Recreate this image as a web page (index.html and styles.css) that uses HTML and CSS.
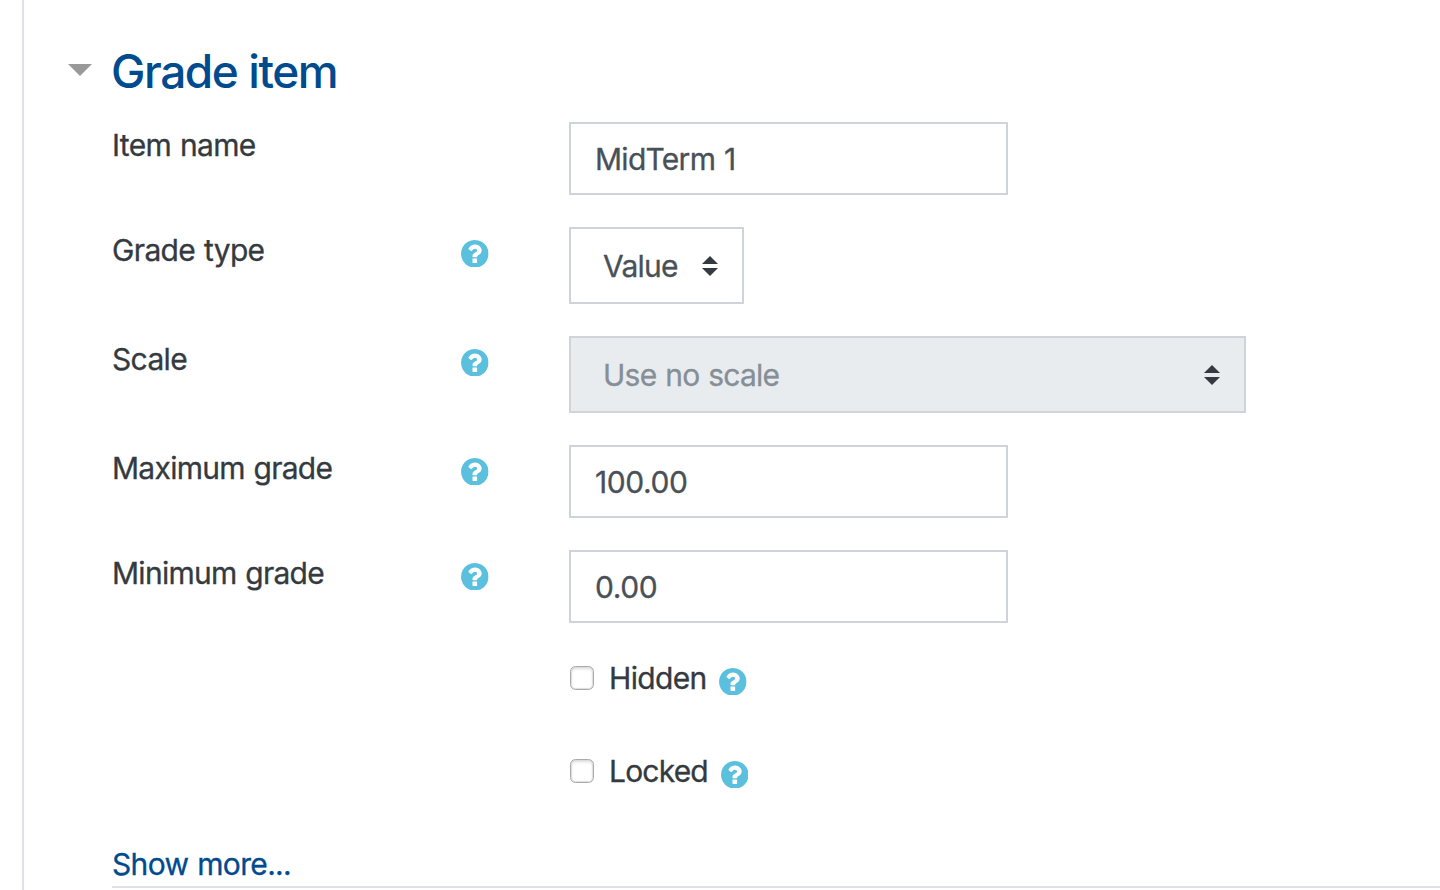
FILE: index.html
```
<!DOCTYPE html>
<html lang="en">
<head>
<meta charset="utf-8">
<title>Grade item</title>
<link rel="stylesheet" href="styles.css">
</head>
<body>
<svg class="defs" width="0" height="0">
<symbol id="help" viewBox="128 128 1536 1536"><path fill="#5bc0de" d="M1024 1376v-192q0-14-9-23t-23-9h-192q-14 0-23 9t-9 23v192q0 14 9 23t23 9h192q14 0 23-9t9-23zm256-672q0-88-55.500-163t-138.500-116-170-41q-243 0-371 213-15 24 8 42l132 100q7 6 19 6 16 0 25-12 53-68 86-92 34-24 86-24 48 0 85.500 26t37.500 59q0 38-20 61t-68 45q-63 28-115.500 86.500t-52.500 125.500v36q0 14 9 23t23 9h192q14 0 23-9t9-23q0-19 21.500-49.500t54.500-49.500q32-18 49-28.500t46-35 44.500-48 28-60.500 12.500-81zm384 192q0 209-103 385.500t-279.500 279.500-385.500 103-385.500-103-279.500-279.500-103-385.500 103-385.500 279.500-279.500 385.500-103 385.500 103 279.500 279.500 103 385.500z"/></symbol>
<symbol id="sort" viewBox="0 0 16 20"><path d="M8 0l8 8H0zM0 12h16l-8 8z" fill="#343a40"/></symbol>
</svg>
<main class="panel">
<h1 class="heading"><svg class="caret" viewBox="0 0 24 12"><path d="M0 0h24L12 12z" fill="#999"/></svg><span class="title">Grade item</span></h1>
<form class="form">
<div class="row row-text"><label class="label name">Item name</label><div class="field"><span class="value item">MidTerm 1</span></div></div>
<div class="row row-select"><label class="label type">Grade type</label><svg class="help"><use href="#help"/></svg><div class="field select short"><span class="value val">Value</span><svg class="sort"><use href="#sort"/></svg></div></div>
<div class="row row-select"><label class="label scale">Scale</label><svg class="help"><use href="#help"/></svg><div class="field select disabled"><span class="value noscale">Use no scale</span><svg class="sort"><use href="#sort"/></svg></div></div>
<div class="row row-text"><label class="label max">Maximum grade</label><svg class="help"><use href="#help"/></svg><div class="field"><span class="value hundred">100.00</span></div></div>
<div class="row row-text"><label class="label min">Minimum grade</label><svg class="help"><use href="#help"/></svg><div class="field"><span class="value zero">0.00</span></div></div>
<div class="check"><span class="box"></span><label class="label hidden">Hidden</label><svg class="help"><use href="#help"/></svg></div>
<div class="check"><span class="box"></span><label class="label locked">Locked</label><svg class="help"><use href="#help"/></svg></div>
</form>
<footer class="more"><a class="link">Show more...</a></footer>
</main>
</body>
</html>
```
FILE: styles.css
```
* { box-sizing: border-box; }
body { margin: 0; background: #fff; overflow: hidden; font-family: Inter, sans-serif; font-size: 30px; letter-spacing: -.65px; word-spacing: 1px; color: #343a40; -webkit-text-stroke: .3px currentColor; }
.defs { display: block; height: 0; }
.panel { height: 890px; margin-left: 22px; border-left: 2px solid #dee2e6; padding: 42px 0 0 44px; }
.heading { display: flex; align-items: center; gap: 19px; margin: 0 0 20px; height: 60px; color: #004b8d; font-size: 46px; font-weight: 500; line-height: 58px; -webkit-text-stroke: 0; }
.caret { width: 24px; height: 12px; margin-top: -4px; }
.title { margin-top: -3px; letter-spacing: -1.42px; word-spacing: 0; white-space: nowrap; }
.form { padding-left: 44px; }
.row { display: grid; grid-template-columns: 349px 108px auto; justify-content: start; align-items: start; }
.row-text { height: 105px; }
.row-select { height: 109px; }
.label { line-height: 36px; padding-top: 5px; white-space: nowrap; justify-self: start; }
.max, .min { letter-spacing: -.73px; }
.help { width: 27.600px; height: 27.600px; margin-top: 12.700px; }
.field { grid-column: 3; display: flex; align-items: center; width: 439px; height: 73px; border: 2px solid #ced4da; padding: 0 24px; color: #495057; white-space: nowrap; }
.select { width: 677px; height: 77px; padding: 0 24px 0 32px; justify-content: space-between; }
.short { width: 175px; }
.disabled { background: #e9ecef; color: #868e96; }
.item, .val, .noscale { letter-spacing: -.73px; }
.hundred, .zero { letter-spacing: -.4px; }
.sort { width: 16px; height: 20px; }
.check { display: flex; align-items: flex-start; height: 93px; padding: 0 0 0 458px; }
.check .help { margin: 12.700px 0 0 12.800px; }
.locked { letter-spacing: -.8px; }
.box { width: 24px; height: 24px; margin: 11px 15px 0 0; border: 1px solid #aaa; border-radius: 5.500px; box-shadow: inset 0 0 1px 1px #ddd, inset 0 2px 3px #ddd; }
.more { margin-left: 44px; height: 47px; border-bottom: 2px solid #dee2e6; color: #004b8d; line-height: 46px; }
```
